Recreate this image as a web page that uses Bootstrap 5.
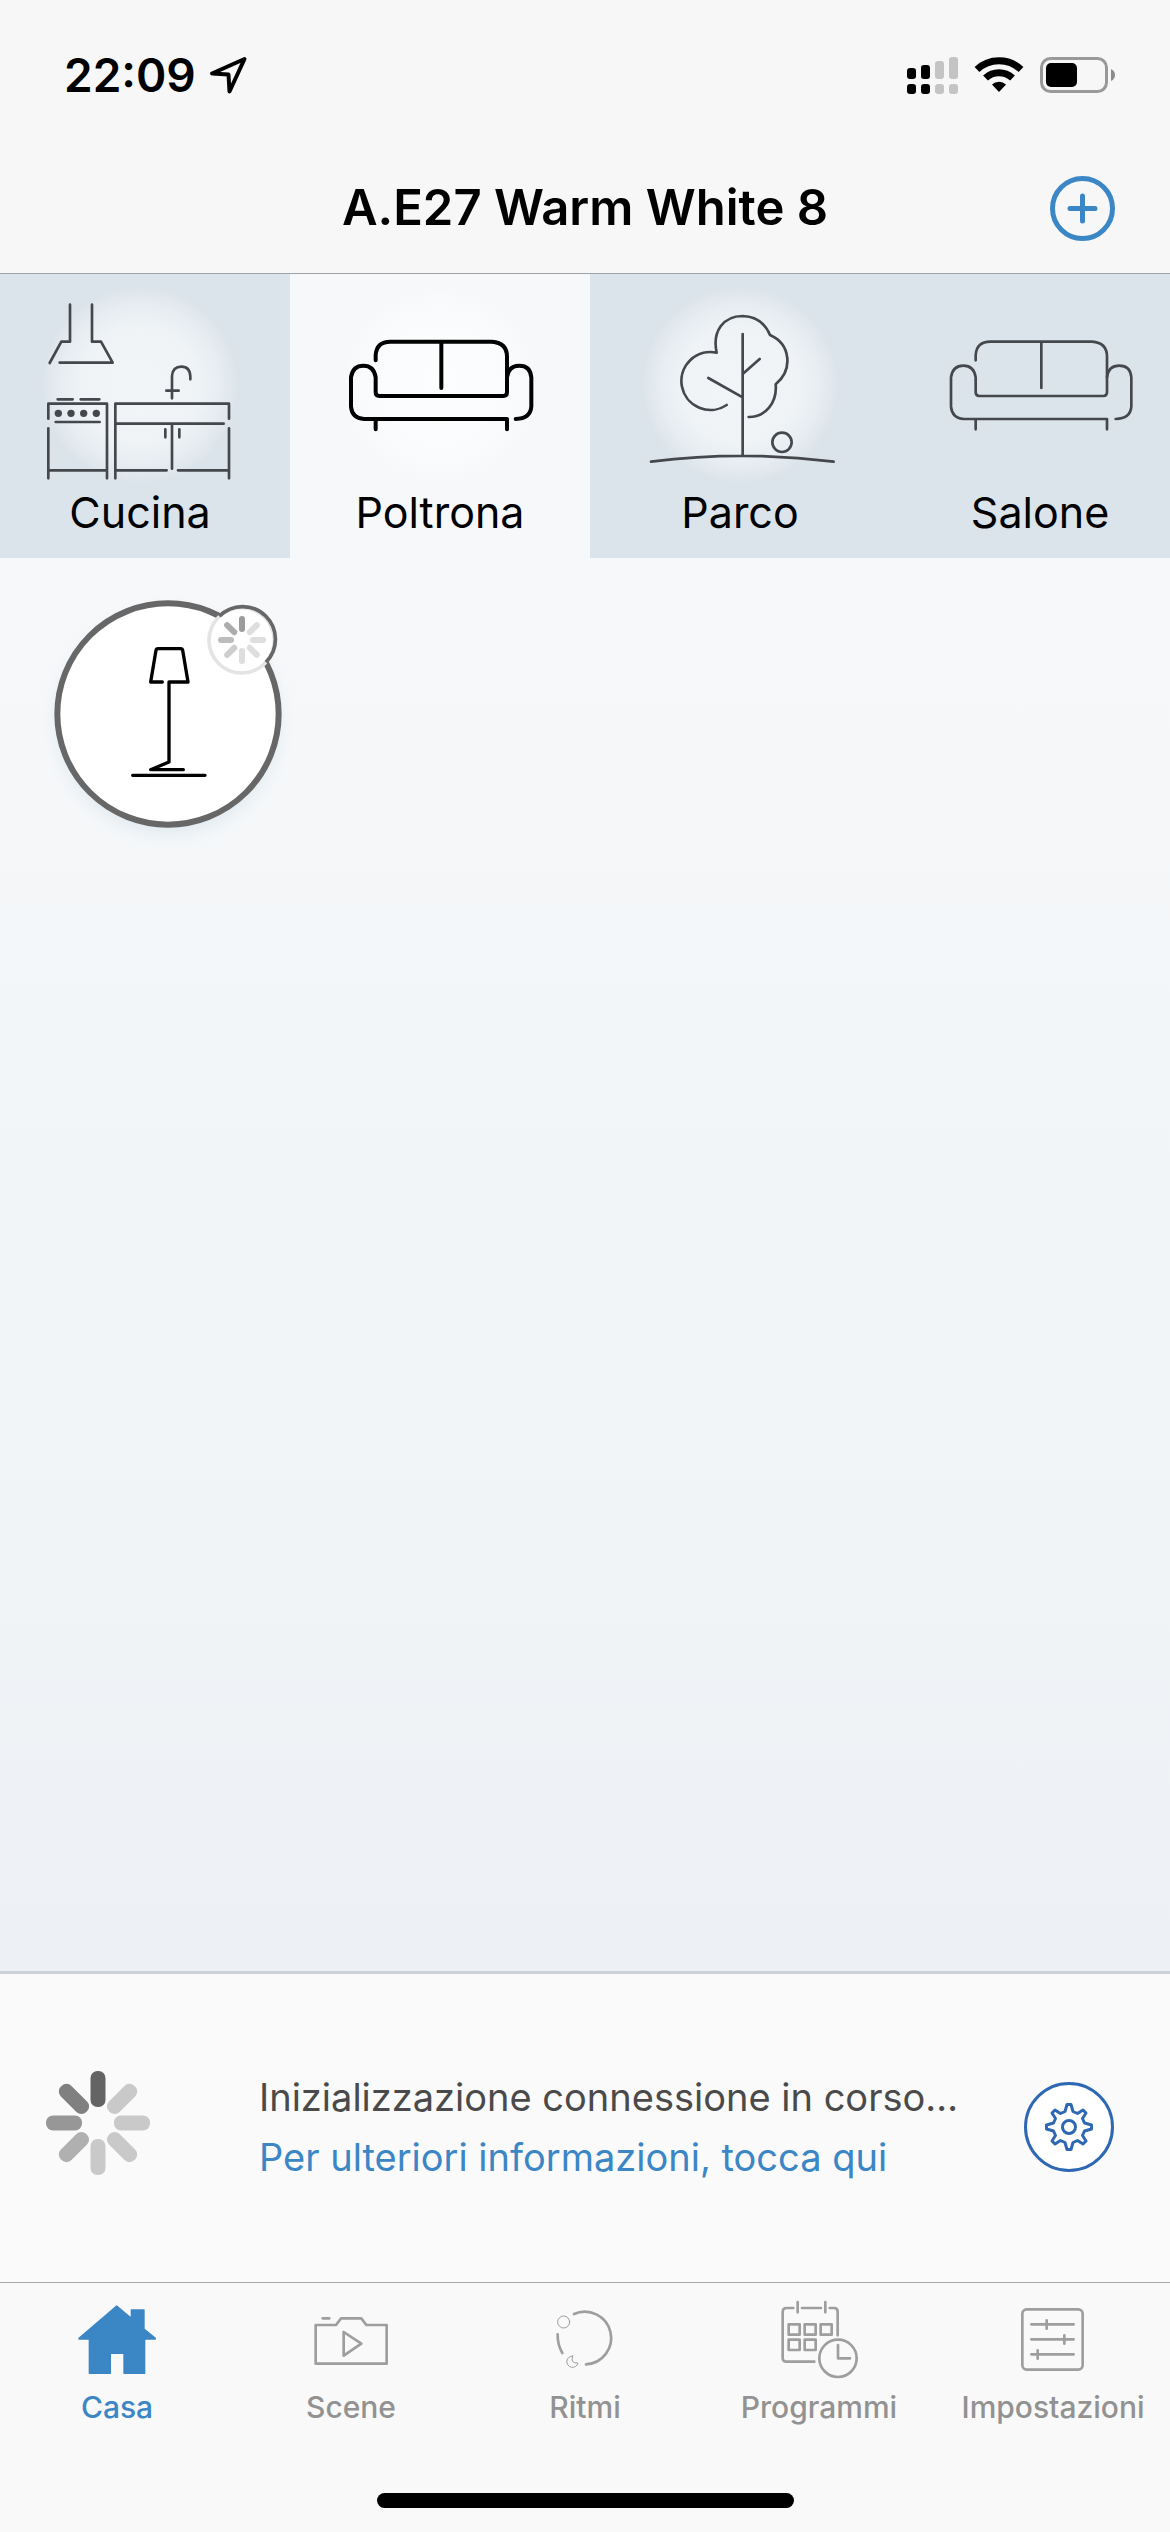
<!DOCTYPE html>
<html lang="it">
<head>
<meta charset="utf-8">
<meta name="viewport" content="width=device-width, initial-scale=1">
<title>A.E27 Warm White 8</title>
<link href="https://cdn.jsdelivr.net/npm/bootstrap@5.3.0/dist/css/bootstrap.min.css" rel="stylesheet">
<style>
  body { font-family: Inter, "Liberation Sans", sans-serif; color: #000; background: #f9f9f9; }
  svg { display: block; flex: none; }
  button { color: inherit; }
  .line-art { fill: none; stroke: currentColor; stroke-linecap: round; stroke-linejoin: round; }

  .top-bar { background: #f7f7f7; border-bottom: 1px solid #9da3a9; }
  .status-row { height: 143px; padding: 6px 54px 0 64px; }
  .clock { font-size: 46px; line-height: 56px; font-weight: 600; }
  .title-row { height: 130px; padding: 0 55px; }
  .title-row::before { content: ""; width: 65px; }
  .page-title { font-size: 49px; line-height: 60px; font-weight: 600; }
  .blue { color: #3b86c5; }

  .room-strip { margin-left: -10px; }
  .room { flex: 0 0 300px; background: #dce4eb; padding: 0 0 18px; }
  .room.active { background: #f7f8fa; }
  .room .line-art { color: #44484c; stroke-width: 8; }
  .room.active .line-art { color: #000; stroke-width: 12; }
  .room-name { font-size: 43px; line-height: 56px; }

  .devices { background: linear-gradient(#f7f8fa, #f1f5f7 55%, #edf1f5); padding: 22px 30px; }
  .lamp-btn { color: #000; }

  .notice { background: #fafafa; border-top: 3px solid #cbd0d4; padding: 93px 56px 95px 45px; }
  .notice-spinner { margin-right: 108px; }
  .notice-text { font-size: 38px; line-height: 60px; color: #4a4a4a; }
  .notice-text a { color: #3b86c5; }
  .gear-btn { width: 90px; height: 90px; border: 3px solid #2e68b3; color: #2e68b3; }

  .tab-bar { background: #f9f9f9; border-top: 1px solid #a9a9a9; }
  .tab-bar a { color: #929292; padding-top: 14px; font-size: 30px; line-height: 40px; font-weight: 500; }
  .tab-bar a.active { color: #3b86c5; }
  .tab-bar .line-art { stroke: #9e9e9e; stroke-width: 8; }
  .home-row { padding: 66px 0 24px; }
  .home-pill { width: 417px; height: 15px; background: #000; }
</style>
</head>
<body>
<div class="d-flex flex-column min-vh-100">

  <header class="top-bar">
    <div class="status-row d-flex align-items-center justify-content-between">
      <div class="d-flex align-items-center gap-2">
        <span class="clock">22:09</span>
        <svg class="ms-1" width="40" height="40" viewBox="205 55 40 40" aria-hidden="true"><path class="line-art" style="stroke-width:4" d="M241.500 59 209 73.500 225.500 74.500 226.500 91.500Z"/></svg>
      </div>
      <svg width="210" height="40" viewBox="906 54 210 40" aria-hidden="true">
        <g><rect x="907" y="67" width="9" height="11" rx="3"/><rect x="921" y="64" width="9" height="14" rx="3"/><rect x="907" y="83" width="9" height="10" rx="3"/><rect x="921" y="83" width="9" height="10" rx="3"/></g>
        <g fill="#c4c4c4"><rect x="935" y="60" width="9" height="18" rx="3"/><rect x="949" y="56" width="9" height="22" rx="3"/><rect x="935" y="83" width="9" height="10" rx="3"/><rect x="949" y="83" width="9" height="10" rx="3"/></g>
        <g fill="none" stroke="#000" stroke-width="7"><path d="M977 68.500a32 32 0 0 1 44 0"/><path d="M985.500 77a20 20 0 0 1 27 0"/></g>
        <path d="M992 83.500a10 10 0 0 1 14 0L999 91Z"/>
        <rect x="1041.500" y="57.500" width="65" height="33" rx="9" fill="none" stroke="#999" stroke-width="3"/>
        <rect x="1046" y="62" width="31" height="24" rx="5"/>
        <path d="M1111 68q4 2 4 6t-4 6Z" fill="#8a8a8a"/>
      </svg>
    </div>
    <div class="title-row d-flex align-items-center justify-content-between">
      <h1 class="page-title mb-0 text-center">A.E27 Warm White 8</h1>
      <button type="button" class="btn p-0 border-0 blue" aria-label="Aggiungi">
        <svg width="65" height="65" viewBox="0 0 65 65"><g class="line-art" stroke-width="5"><circle cx="32.500" cy="32.500" r="30"/><path d="M20 32.500H45M32.500 20V45"/></g></svg>
      </button>
    </div>
  </header>

  <nav class="overflow-hidden" aria-label="Stanze">
    <div class="room-strip d-flex">
      <button type="button" class="room border-0 text-center">
        <svg width="300" height="210" viewBox="-30 12 900 630" aria-hidden="true">
          <defs>
            <radialGradient id="glow"><stop offset="0" stop-color="#f1f5f7"/><stop offset=".6" stop-color="#eff3f6"/><stop offset=".8" stop-color="#eff3f6" stop-opacity=".6"/><stop offset="1" stop-color="#eff3f6" stop-opacity="0"/></radialGradient>
            <radialGradient id="glowLight"><stop offset="0" stop-color="#fcfdfd"/><stop offset=".6" stop-color="#fbfcfd"/><stop offset="1" stop-color="#fbfcfd" stop-opacity="0"/></radialGradient>
          </defs>
          <circle cx="420" cy="345" r="295" fill="url(#glow)"/>
          <g class="line-art">
            <path d="M210 104V215H184L149 279M276 104V215H303L338 278H179"/>
            <path d="M173 388H218M242 388H298M145 446V401H321V625M145 475V625M167 456H299M145 601H321"/>
            <path d="M346 625V401H687V446M346 461H671M687 475V625M516 461V596M346 601H500M534 601H687M496 478V502M538 478V502"/>
            <path d="M516 385V318Q518 290 544 290T571 320V328M499 362H536"/>
          </g>
          <g fill="#44484c"><circle cx="175" cy="430" r="11"/><circle cx="213" cy="430" r="11"/><circle cx="251" cy="430" r="11"/><circle cx="289" cy="430" r="11"/></g>
        </svg>
        <span class="room-name d-block">Cucina</span>
      </button>
      <button type="button" class="room active border-0 text-center" aria-current="true">
        <svg width="300" height="210" viewBox="0 12 900 630" aria-hidden="true">
          <circle cx="450" cy="345" r="295" fill="url(#glowLight)"/>
          <g class="line-art">
            <path d="M257 271V255Q260 215 301 215H606Q651 218 651 260V367Q651 378 640 378H268Q257 378 257 367V322Q252 287 220 287T183 322V410Q186 445 222 447H651V478M257 449V478M454 217V354"/>
            <path d="M651 322Q655 287 688 287T724 322V410Q721 446 677 447"/>
          </g>
        </svg>
        <span class="room-name d-block">Poltrona</span>
      </button>
      <button type="button" class="room border-0 text-center">
        <svg width="300" height="210" viewBox="30 12 900 630" aria-hidden="true">
          <circle cx="480" cy="345" r="295" fill="url(#glow)"/>
          <g class="line-art">
            <path d="M440 405A87 87 0 1 1 410 248C396 184 430 138 488 138Q547 140 570 195C632 222 640 299 587 343C592 399 556 441 506 441"/>
            <path d="M488 192V556M488 382 385 324M488 312 539 267M213 575Q488 540 761 575"/>
            <circle cx="606" cy="517" r="29"/>
          </g>
        </svg>
        <span class="room-name d-block">Parco</span>
      </button>
      <button type="button" class="room border-0 text-center">
        <svg width="300" height="210" viewBox="0 12 900 630" aria-hidden="true">
          <g class="line-art">
            <path d="M257 271V255Q260 215 301 215H606Q651 218 651 260V367Q651 378 640 378H268Q257 378 257 367V322Q252 287 220 287T183 322V410Q186 445 222 447H651V478M257 449V478M454 217V354"/>
            <path d="M651 322Q655 287 688 287T724 322V410Q721 446 677 447"/>
          </g>
        </svg>
        <span class="room-name d-block">Salone</span>
      </button>
    </div>
  </nav>

  <main class="devices flex-grow-1">
    <button type="button" class="lamp-btn btn p-0 border-0" aria-label="Lampada da terra">
      <svg width="280" height="270" viewBox="0 0 840 810">
        <defs>
          <filter id="soft" x="-20%" y="-20%" width="140%" height="140%"><feGaussianBlur stdDeviation="24"/></filter>
          <g id="spokes">
            <rect x="-7.500" y="-52" width="15" height="36" rx="7" fill="#646464"/>
            <rect x="-7.500" y="-52" width="15" height="36" rx="7" fill="#c9c9c9" transform="rotate(45)"/>
            <rect x="-7.500" y="-52" width="15" height="36" rx="7" fill="#c9c9c9" transform="rotate(90)"/>
            <rect x="-7.500" y="-52" width="15" height="36" rx="7" fill="#c9c9c9" transform="rotate(135)"/>
            <rect x="-7.500" y="-52" width="15" height="36" rx="7" fill="#c9c9c9" transform="rotate(180)"/>
            <rect x="-7.500" y="-52" width="15" height="36" rx="7" fill="#b0b0b0" transform="rotate(225)"/>
            <rect x="-7.500" y="-52" width="15" height="36" rx="7" fill="#979797" transform="rotate(270)"/>
            <rect x="-7.500" y="-52" width="15" height="36" rx="7" fill="#808080" transform="rotate(315)"/>
          </g>
        </defs>
        <circle cx="414" cy="425" r="336" fill="#dbe7ee" opacity=".8" filter="url(#soft)"/>
        <circle cx="414" cy="402" r="332" fill="#fff" stroke="#676767" stroke-width="18"/>
        <g class="line-art" stroke-width="10">
          <path d="M397 306H362L378 211Q379 206 384 206H452Q457 206 458 211L474 306H417V546L362 569H460M308 586H525"/>
        </g>
        <circle cx="635" cy="181" r="98" fill="#fff" stroke="#e4e4e4" stroke-width="11"/>
        <path d="M568 109A98 98 0 0 1 708 247" fill="none" stroke="#676767" stroke-width="11"/>
        <g transform="translate(636 180)" fill="#dedede">
          <rect x="-9" y="-72" width="18" height="48" rx="9" fill="#9c9c9c"/>
          <rect x="-9" y="-72" width="18" height="48" rx="9" transform="rotate(45)"/>
          <rect x="-9" y="-72" width="18" height="48" rx="9" transform="rotate(90)"/>
          <rect x="-9" y="-72" width="18" height="48" rx="9" transform="rotate(135)"/>
          <rect x="-9" y="-72" width="18" height="48" rx="9" transform="rotate(180)"/>
          <rect x="-9" y="-72" width="18" height="48" rx="9" fill="#cecece" transform="rotate(225)"/>
          <rect x="-9" y="-72" width="18" height="48" rx="9" fill="#bdbdbd" transform="rotate(270)"/>
          <rect x="-9" y="-72" width="18" height="48" rx="9" fill="#acacac" transform="rotate(315)"/>
        </g>
      </svg>
    </button>
  </main>

  <section class="notice d-flex align-items-center" aria-live="polite">
    <svg class="notice-spinner mb-2" width="106" height="106" viewBox="-53 -53 106 106" role="img" aria-label="Caricamento"><use href="#spokes"/></svg>
    <div class="notice-text text-nowrap">
      <div>Inizializzazione connessione in corso…</div>
      <a class="d-block text-decoration-none" href="#">Per ulteriori informazioni, tocca qui</a>
    </div>
    <button type="button" class="gear-btn btn p-0 rounded-circle bg-white d-flex align-items-center justify-content-center ms-auto flex-shrink-0" aria-label="Impostazioni di connessione">
      <svg width="52" height="52" viewBox="-26 -26 52 52">
        <g class="line-art" stroke-width="3">
          <circle r="6.500"/>
          <path d="M-2 -22.500H2L4 -15.500 8.500 -13.500 14 -17 17 -14 13.500 -8.500 15.500 -4 22.500 -2V2L15.500 4 13.500 8.500 17 14 14 17 8.500 13.500 4 15.500 2 22.500H-2L-4 15.500 -8.500 13.500 -14 17 -17 14 -13.500 8.500 -15.500 4 -22.500 2V-2L-15.500 -4 -13.500 -8.500 -17 -14 -14 -17 -8.500 -13.500 -4 -15.500Z"/>
        </g>
      </svg>
    </button>
  </section>

  <footer class="tab-bar">
    <nav class="row row-cols-5 g-0" aria-label="Principale">
      <a class="col d-flex flex-column align-items-center text-decoration-none active" href="#" aria-current="page">
        <svg width="90" height="90" viewBox="214 81 270 270" aria-hidden="true"><path d="M348 108 392 145V120H430V177L464 205V207H432V310H370V250H329V310H266V207H235V205Z" fill="#3b86c5" stroke="#3b86c5" stroke-width="4" stroke-linejoin="round"/></svg>
        Casa
      </a>
      <a class="col d-flex flex-column align-items-center text-decoration-none" href="#">
        <svg width="90" height="90" viewBox="917 81 270 270" aria-hidden="true"><g class="line-art"><path d="M946 165H1007L1022 145H1083L1098 165H1159V281H946ZM967 145H987M1030 186V257L1083 221Z"/></g></svg>
        Scene
      </a>
      <a class="col d-flex flex-column align-items-center text-decoration-none" href="#">
        <svg width="90" height="90" viewBox="270 81 270 270" aria-hidden="true"><g class="line-art"><path d="M372 132A79 79 0 1 1 408 283M323 193Q322 223 337 249"/><g style="stroke-width:3"><circle cx="341" cy="156" r="18"/><path d="M368 258A17 17 0 1 0 384 279Q360 281 368 258Z"/></g></g></svg>
        Ritmi
      </a>
      <a class="col d-flex flex-column align-items-center text-decoration-none" href="#">
        <svg width="90" height="90" viewBox="969 81 270 270" aria-hidden="true"><g class="line-art"><path d="M1027 114H1007Q995 114 995 126V263Q995 275 1007 275H1090M1053 114H1110M1136 114H1149Q1160 114 1160 125V196M1040 96V127M1123 96V127"/><path d="M1013 163H1046V194H1013ZM1061 163H1094V194H1061ZM1109 163H1142V194H1109ZM1013 209H1046V240H1013ZM1061 209H1094V240H1061Z"/><circle cx="1161" cy="265" r="56"/><path d="M1161 225V265H1197"/></g></svg>
        Programmi
      </a>
      <a class="col d-flex flex-column align-items-center text-decoration-none" href="#">
        <svg width="90" height="90" viewBox="411 81 270 270" aria-hidden="true"><g class="line-art"><rect x="454" y="118" width="181" height="181" rx="13"/><path d="M481 163H608M481 208H608M481 253H608M527 151V176M580 196V221M500 241V266"/></g></svg>
        Impostazioni
      </a>
    </nav>
    <div class="home-row d-flex justify-content-center"><div class="home-pill rounded-pill"></div></div>
  </footer>

</div>
<script src="https://cdn.jsdelivr.net/npm/bootstrap@5.3.0/dist/js/bootstrap.bundle.min.js"></script>
</body>
</html>
